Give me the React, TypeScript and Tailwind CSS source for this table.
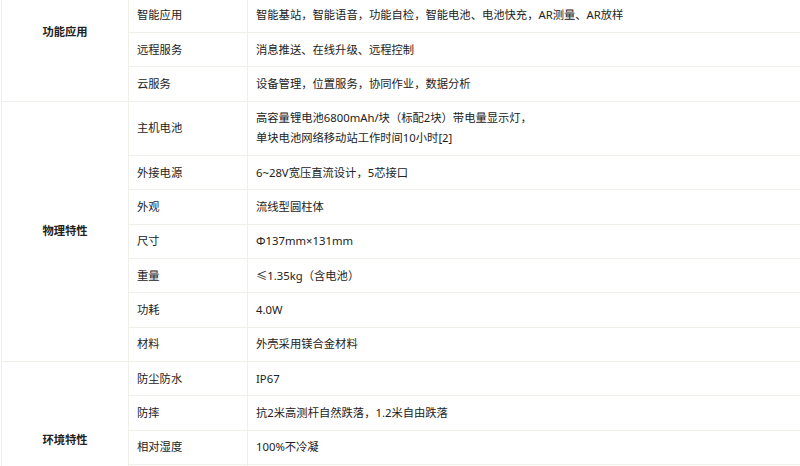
type Row = { label: string; value: string[] };
type Group = { title: string; rows: Row[] };

const groups: Group[] = [
  {
    title: '功能应用',
    rows: [
      { label: '产品定位', value: ['智能测量终端'] },
      { label: '智能应用', value: ['智能基站，智能语音，功能自检，智能电池、电池快充，AR测量、AR放样'] },
      { label: '远程服务', value: ['消息推送、在线升级、远程控制'] },
      { label: '云服务', value: ['设备管理，位置服务，协同作业，数据分析'] },
    ],
  },
  {
    title: '物理特性',
    rows: [
      { label: '主机电池', value: ['高容量锂电池6800mAh/块（标配2块）带电量显示灯，', '单块电池网络移动站工作时间10小时[2]'] },
      { label: '外接电源', value: ['6~28V宽压直流设计，5芯接口'] },
      { label: '外观', value: ['流线型圆柱体'] },
      { label: '尺寸', value: ['Φ137mm×131mm'] },
      { label: '重量', value: ['≤1.35kg（含电池）'] },
      { label: '功耗', value: ['4.0W'] },
      { label: '材料', value: ['外壳采用镁合金材料'] },
    ],
  },
  {
    title: '环境特性',
    rows: [
      { label: '防尘防水', value: ['IP67'] },
      { label: '防摔', value: ['抗2米高测杆自然跌落，1.2米自由跌落'] },
      { label: '相对湿度', value: ['100%不冷凝'] },
      { label: '工作温度', value: ['主机：-30℃~+65℃', '存储：-40℃~+80℃'] },
    ],
  },
];

export default function App() {
  return (
    <div className="h-[466px] w-[800px] overflow-hidden bg-white font-['Noto_Sans','Noto_Sans_CJK_SC',sans-serif] text-[11.3px] leading-[20px] text-[#222222]">
      <table className="-mt-[36.8px] ml-px w-[820px] table-fixed border-collapse">
        <colgroup>
          <col className="w-[127px]" />
          <col className="w-[119px]" />
          <col />
        </colgroup>
        <tbody>
          {groups.map((group) =>
            group.rows.map((row, i) => (
              <tr key={group.title + row.label}>
                {i === 0 && (
                  <td
                    rowSpan={group.rows.length}
                    className="border border-[#f0efe9] text-center align-middle font-bold"
                  >
                    {group.title}
                  </td>
                )}
                <td className="border border-[#f0efe9] px-2 py-[6.68px] align-middle">{row.label}</td>
                <td className="border border-[#f0efe9] px-2 py-[6.68px] align-middle">
                  {row.value.map((line) => (
                    <div key={line}>{line}</div>
                  ))}
                </td>
              </tr>
            )),
          )}
        </tbody>
      </table>
    </div>
  );
}
